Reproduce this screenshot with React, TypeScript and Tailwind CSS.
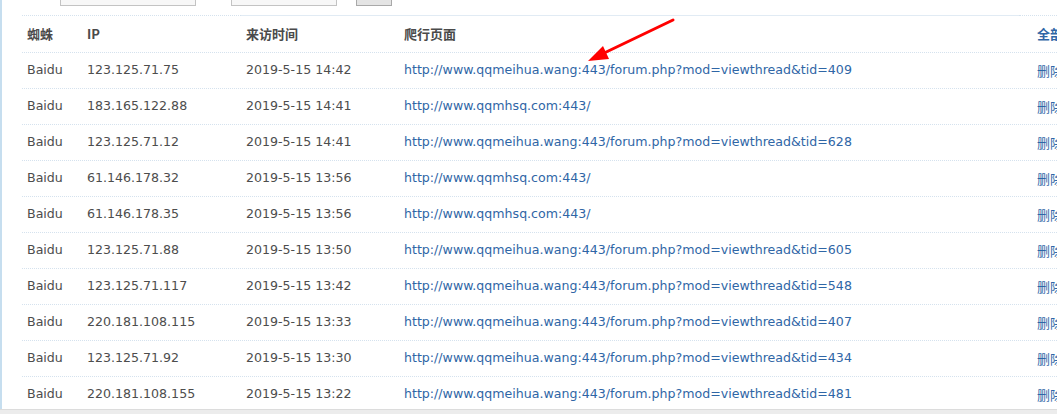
const rows = [
  { ip: '123.125.71.75', time: '2019-5-15 14:42', url: 'http://www.qqmeihua.wang:443/forum.php?mod=viewthread&tid=409' },
  { ip: '183.165.122.88', time: '2019-5-15 14:41', url: 'http://www.qqmhsq.com:443/' },
  { ip: '123.125.71.12', time: '2019-5-15 14:41', url: 'http://www.qqmeihua.wang:443/forum.php?mod=viewthread&tid=628' },
  { ip: '61.146.178.32', time: '2019-5-15 13:56', url: 'http://www.qqmhsq.com:443/' },
  { ip: '61.146.178.35', time: '2019-5-15 13:56', url: 'http://www.qqmhsq.com:443/' },
  { ip: '123.125.71.88', time: '2019-5-15 13:50', url: 'http://www.qqmeihua.wang:443/forum.php?mod=viewthread&tid=605' },
  { ip: '123.125.71.117', time: '2019-5-15 13:42', url: 'http://www.qqmeihua.wang:443/forum.php?mod=viewthread&tid=548' },
  { ip: '220.181.108.115', time: '2019-5-15 13:33', url: 'http://www.qqmeihua.wang:443/forum.php?mod=viewthread&tid=407' },
  { ip: '123.125.71.92', time: '2019-5-15 13:30', url: 'http://www.qqmeihua.wang:443/forum.php?mod=viewthread&tid=434' },
  { ip: '220.181.108.155', time: '2019-5-15 13:22', url: 'http://www.qqmeihua.wang:443/forum.php?mod=viewthread&tid=481' },
];

const grid = 'grid grid-cols-[60px_159px_158px_633px_1fr]';

export default function App() {
  return (
    <div className="relative flex h-[414px] w-[1057px] flex-col overflow-hidden bg-white font-['DejaVu_Sans','Noto_Sans_CJK_SC',sans-serif]">
      <div className="flex min-h-0 flex-1 border-l-2 border-[#c6deef]">
        <div className="flex min-w-0 flex-1 flex-col overflow-hidden pl-5">
          {/* search bar, mostly scrolled out of view */}
          <div className="flex h-[15px] shrink-0 items-end overflow-hidden pb-[9px] text-[12px]">
            <span className="mb-[3px] w-[38px] text-[#666]">蜘蛛：</span>
            <div className="h-[22px] w-[136px] border border-[#c3c3c3] bg-[#f7f7f7]" />
            <div className="ml-[35px] h-[22px] w-[106px] border border-[#c3c3c3] bg-[#f7f7f7]" />
            <div className="ml-[19px] flex h-[22px] w-[36px] items-center justify-center border border-[#a9a9a9] bg-[#e4e4e4] text-[12px] text-[#333]">
              搜索
            </div>
            <span className="mb-[3px] ml-[10px] text-[#444]">时间</span>
            <span className="mb-[3px] ml-[52px] text-[#2f66a6]">全部</span>
          </div>

          {/* line under the search bar */}
          <div className="flex h-px shrink-0">
            <div className="w-[219px] border-t border-dotted border-[#d5e2ee]" />
            <div className="w-[778px] bg-[#e1ebf4]" />
            <div className="flex-1 border-t border-dotted border-[#d5e2ee]" />
          </div>

          <div className={`${grid} h-[37px] shrink-0 items-center border-b border-dotted border-[#d5e2ee] font-['Noto_Sans_CJK_SC',sans-serif] text-[13px] font-bold text-[#4a4a4a]`}>
            <div className="pl-[5px]">蜘蛛</div>
            <div className="pl-[5px]">IP</div>
            <div className="pl-[5px]">来访时间</div>
            <div className="pl-[5px]">爬行页面</div>
            <div className="whitespace-nowrap pl-[5px] text-[#2f66a6]">全部</div>
          </div>

          {rows.map((r, i) => (
            <div
              key={i}
              className={`${grid} h-[36px] shrink-0 items-center border-b border-dotted border-[#d5e2ee] text-[12.6px] text-[#4d4d4d]`}
            >
              <div className="pl-[5px]">Baidu</div>
              <div className="pl-[5px]">{r.ip}</div>
              <div className="pl-[5px]">{r.time}</div>
              <div className="whitespace-nowrap pl-[5px] text-[#2f66a6]">{r.url}</div>
              <div className="whitespace-nowrap pl-[5px] font-['Noto_Sans_CJK_SC',sans-serif] text-[13px] text-[#2f66a6]">删除</div>
            </div>
          ))}
        </div>
      </div>
      <div className="h-[5px] shrink-0 border-t border-[#dcdcdc] bg-[#ececec]" />

      {/* red annotation arrow */}
      <svg className="absolute left-[580px] top-[15px]" width="100" height="55" viewBox="0 0 100 55">
        <line x1="93" y1="5" x2="20" y2="40" stroke="#ff0000" strokeWidth="3" strokeLinecap="round" />
        <polygon points="8,46 29,44 23,31" fill="#ff0000" />
      </svg>
    </div>
  );
}
